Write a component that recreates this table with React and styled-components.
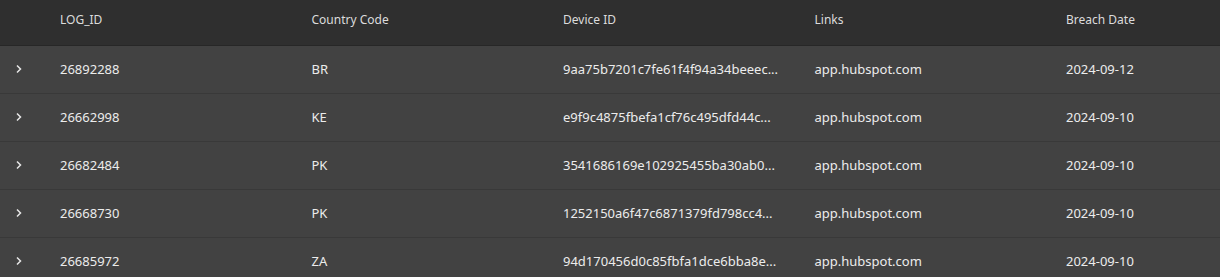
import React from 'react';
import styled, { createGlobalStyle } from 'styled-components';

const GlobalStyle = createGlobalStyle`
  html, body {
    margin: 0;
    padding: 0;
    background: #424242;
  }
  body {
    font-family: 'Noto Sans', 'DejaVu Sans', sans-serif;
  }
`;

const Table = styled.div`
  width: 1220px;
  display: flex;
  flex-direction: column;
  overflow: hidden;
`;

const Row = styled.div`
  display: grid;
  grid-template-columns: 44px repeat(4, 251.5px) 1fr;
  align-items: center;
  box-sizing: border-box;
  height: ${p => (p.$head ? 46 : 48)}px;
  padding-bottom: ${p => (p.$head ? 7 : 2)}px;
  background: ${p => (p.$head ? '#2f2f2f' : '#424242')};
  border-bottom: 1px solid ${p => (p.$head ? '#272727' : '#393939')};
  font-size: ${p => (p.$head ? '12px' : '13px')};
  color: ${p => (p.$head ? '#dcdcdc' : '#ececec')};
`;

const Cell = styled.div`
  padding-left: 16px;
  white-space: nowrap;
`;

const Expander = styled.div`
  display: flex;
  align-items: center;
  padding-left: 12px;
  svg {
    display: block;
  }
`;

const Chevron = () => (
  <svg width="14" height="14" viewBox="0 0 14 14">
    <path d="M5 3.5 L8.5 7 L5 10.5" fill="none" stroke="#e6e6e6" strokeWidth="1.5" />
  </svg>
);

const rows = [
  ['26892288', 'BR', '9aa75b7201c7fe61f4f94a34beeec...', 'app.hubspot.com', '2024-09-12'],
  ['26662998', 'KE', 'e9f9c4875fbefa1cf76c495dfd44c...', 'app.hubspot.com', '2024-09-10'],
  ['26682484', 'PK', '3541686169e102925455ba30ab0...', 'app.hubspot.com', '2024-09-10'],
  ['26668730', 'PK', '1252150a6f47c6871379fd798cc4...', 'app.hubspot.com', '2024-09-10'],
  ['26685972', 'ZA', '94d170456d0c85fbfa1dce6bba8e...', 'app.hubspot.com', '2024-09-10'],
];

export default function App() {
  return (
    <>
      <GlobalStyle />
      <Table>
        <Row $head>
          <div />
          <Cell>LOG_ID</Cell>
          <Cell>Country Code</Cell>
          <Cell>Device ID</Cell>
          <Cell>Links</Cell>
          <Cell>Breach Date</Cell>
        </Row>
        {rows.map(r => (
          <Row key={r[0]}>
            <Expander>
              <Chevron />
            </Expander>
            <Cell>{r[0]}</Cell>
            <Cell>{r[1]}</Cell>
            <Cell>{r[2]}</Cell>
            <Cell>{r[3]}</Cell>
            <Cell>{r[4]}</Cell>
          </Row>
        ))}
      </Table>
    </>
  );
}
